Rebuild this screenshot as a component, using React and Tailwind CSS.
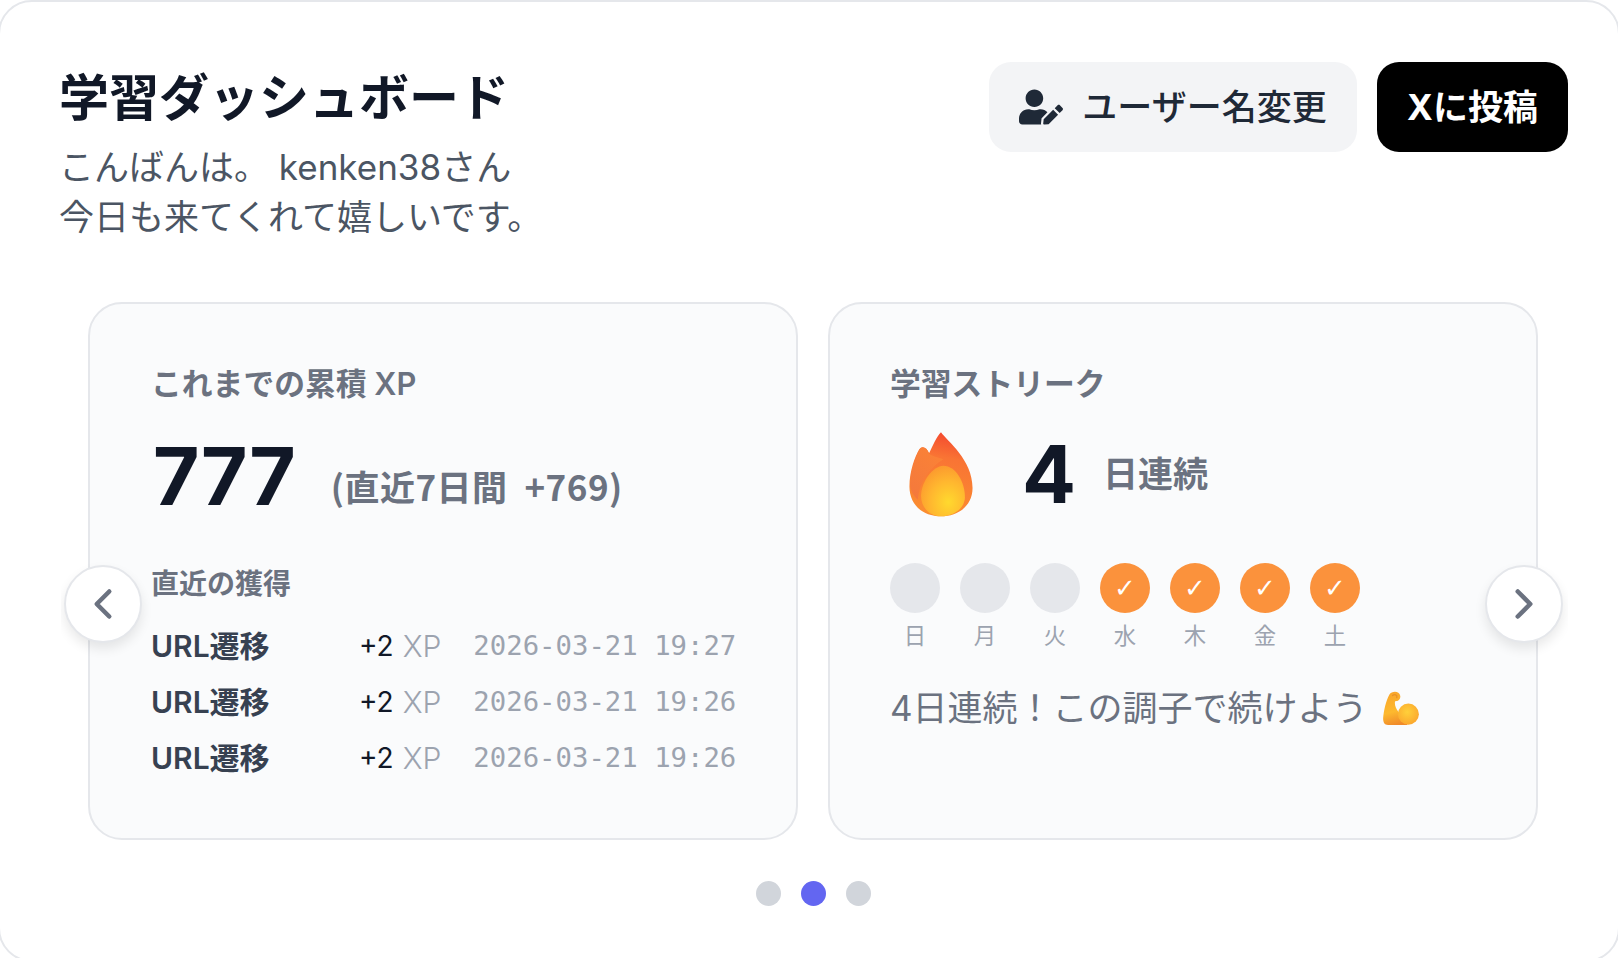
import React from "react";
import { FaUserEdit } from "react-icons/fa";
import { ChevronLeft, ChevronRight } from "lucide-react";

const recent = [
	{ label: "URL遷移", date: "2026-03-21 19:27" },
	{ label: "URL遷移", date: "2026-03-21 19:26" },
	{ label: "URL遷移", date: "2026-03-21 19:26" },
];

const days = [
	{ label: "日", done: false },
	{ label: "月", done: false },
	{ label: "火", done: false },
	{ label: "水", done: true },
	{ label: "木", done: true },
	{ label: "金", done: true },
	{ label: "土", done: true },
];

const FlameIcon = () => (
	<svg viewBox="115 90 200 265" className="w-[68px] h-[88px]">
		<defs>
			<linearGradient id="flameOuter" x1="0.6" y1="0" x2="0.45" y2="1">
				<stop offset="0" stopColor="#f4482f" />
				<stop offset="0.3" stopColor="#f97434" />
				<stop offset="1" stopColor="#fb8e30" />
			</linearGradient>
			<linearGradient id="flameMid" x1="0.8" y1="0" x2="0.2" y2="1">
				<stop offset="0" stopColor="#fb8236" />
				<stop offset="1" stopColor="#f4793c" />
			</linearGradient>
			<radialGradient id="flameInner" cx="0.62" cy="0.72" r="0.85">
				<stop offset="0" stopColor="#ffd92e" />
				<stop offset="0.5" stopColor="#ffb62f" />
				<stop offset="1" stopColor="#fb8f2e" />
			</radialGradient>
		</defs>
		<path d="M215 97C232 122 310 178 310 265C310 320 265 350 215 350C160 350 120 315 120 260C120 215 136 170 150 148C158 136 172 142 179 160C190 140 202 108 215 97Z" fill="url(#flameOuter)" />
		<path d="M222 178C180 205 150 245 145 300C130 285 122 270 122 250C124 215 138 172 150 148C158 136 172 142 179 160C188 170 205 172 222 178Z" fill="url(#flameMid)" />
		<path d="M222 198C260 198 287 248 287 292C287 328 250 350 215 350C180 350 153 322 155 285C158 243 190 200 222 198Z" fill="url(#flameInner)" />
	</svg>
);

const MuscleIcon = () => (
	<svg viewBox="0 0 102 97" className="w-[36px] h-[34px]">
		<defs>
			<linearGradient id="armFill" x1="0.3" y1="0" x2="0.5" y2="1">
				<stop offset="0" stopColor="#f9a62c" />
				<stop offset="0.6" stopColor="#fdb92e" />
				<stop offset="1" stopColor="#f08a2a" />
			</linearGradient>
			<radialGradient id="bicepFill" cx="0.45" cy="0.4" r="0.65">
				<stop offset="0" stopColor="#ffd03a" />
				<stop offset="1" stopColor="#fba52d" />
			</radialGradient>
		</defs>
		<path d="M18 10C24 0 46 -2 49 14C50 24 42 30 34 29C32 40 36 50 44 60L70 97L14 97C4 97 0 90 0 78C2 55 8 28 18 10Z" fill="url(#armFill)" />
		<circle cx="72" cy="66" r="30" fill="url(#bicepFill)" />
		<path d="M27 13C33 8 41 11 39 19" fill="none" stroke="#e8932a" strokeWidth="4" strokeLinecap="round" />
	</svg>
);

const ArrowButton = ({ side, children }) => (
	<button
		type="button"
		className={`absolute top-1/2 -translate-y-1/2 ${side} w-[78px] h-[78px] flex items-center justify-center rounded-full bg-white border-2 border-[#e5e7eb] shadow-[0_6px_12px_rgba(0,0,0,0.09)] text-[#6b7280]`}
	>
		{children}
	</button>
);

export default function App() {
	return (
		<div className="h-[958px] overflow-hidden bg-white font-['Inter','Noto_Sans_CJK_JP',sans-serif]">
			<div className="-mx-[2px] h-[962px] bg-white border-2 border-[#e5e7eb] rounded-[34px] pl-[59px] pr-[50px] pt-[60px]">
				<div className="flex justify-between items-start">
					<div className="mt-[4px]">
						<h1 className="text-[50px] leading-[64px] font-bold text-[#111827]">学習ダッシュボード</h1>
						<p className="mt-[13px] text-[35px] leading-[49.5px] text-[#4b5563]">
							こんばんは。 kenken38さん
							<br />
							今日も来てくれて嬉しいです。
						</p>
					</div>
					<div className="flex gap-[20px]">
						<button type="button" className="w-[368px] h-[90px] flex items-center justify-center gap-[19px] rounded-[22px] bg-[#f3f4f6] text-[#1f2937] text-[35px] font-medium">
							<FaUserEdit className="w-[44px] h-[36px]" />
							ユーザー名変更
						</button>
						<button type="button" className="w-[191px] h-[90px] rounded-[22px] bg-black text-white text-[35px] font-bold">
							Xに投稿
						</button>
					</div>
				</div>

				<div className="relative mt-[60px] ml-[2px] overflow-hidden">
					<div className="flex gap-[30px] h-[538px] pl-[27px]">
						<section className="w-[710px] shrink-0 rounded-[34px] border-2 border-[#e5e7eb] bg-[#fafbfc] pl-[61px] pt-[60px]">
							<h2 className="text-[30.8px] leading-[40px] font-semibold text-[#6b7280]">これまでの累積 XP</h2>
							<div className="mt-[30px] flex items-center gap-[35px]">
								<span className="ml-[2px] text-[80px] leading-[84px] font-bold text-[#111827]">777</span>
								<span className="mt-[21px] font-['Noto_Sans_CJK_JP',sans-serif] text-[35px] tracking-[0.5px] font-semibold text-[#6b7280]">(直近7日間 &nbsp;+769)</span>
							</div>
							<h3 className="mt-[46px] text-[28px] leading-[40px] font-semibold text-[#6b7280]">直近の獲得</h3>
							<ul className="mt-[14px]">
								{recent.map((item, i) => (
									<li key={i} className="flex items-center h-[56px]">
										<span className="w-[208px] text-[30px] font-semibold text-[#374151]">{item.label}</span>
										<span className="text-[28px] text-[#111827]">+2</span>
										<span className="ml-[9px] text-[30px] font-light text-[#9ca3af]">XP</span>
										<span className="ml-[32px] font-['DejaVu_Sans_Mono',monospace] text-[27.3px] text-[#9ca3af]">{item.date}</span>
									</li>
								))}
							</ul>
						</section>

						<section className="w-[710px] shrink-0 rounded-[34px] border-2 border-[#e5e7eb] bg-[#fafbfc] pl-[60px] pt-[60px]">
							<h2 className="text-[30.8px] leading-[40px] font-semibold text-[#6b7280]">学習ストリーク</h2>
							<div className="mt-[26px] ml-[17px] flex items-center">
								<FlameIcon />
								<span className="ml-[47px] text-[80px] leading-[88px] font-bold text-[#111827]">4</span>
								<span className="ml-[27px] text-[35px] font-semibold text-[#6b7280]">日連続</span>
							</div>
							<div className="mt-[45px] flex gap-[20px]">
								{days.map((day) => (
									<div key={day.label} className="w-[50px] flex flex-col items-center">
										<div className={day.done ? "w-[50px] h-[50px] rounded-full bg-[#fb923c] flex items-center justify-center text-white font-['DejaVu_Sans',sans-serif] text-[26px]" : "w-[50px] h-[50px] rounded-full bg-[#e5e7eb]"}>
											{day.done ? "✓" : ""}
										</div>
										<span className="mt-[7px] text-[22.4px] leading-[32px] text-[#9ca3af]">{day.label}</span>
									</div>
								))}
							</div>
							<p className="mt-[32px] flex items-center gap-[15px] text-[35px] leading-[48px] text-[#6b7280]">
								4日連続！この調子で続けよう
								<MuscleIcon />
							</p>
						</section>
					</div>

					<div className="mt-[41px] flex justify-center gap-[20px] pr-[3px]">
						<span className="w-[25px] h-[25px] rounded-full bg-[#d1d5db]" />
						<span className="w-[25px] h-[25px] rounded-full bg-[#6366f1]" />
						<span className="w-[25px] h-[25px] rounded-full bg-[#d1d5db]" />
					</div>

					<ArrowButton side="left-[3px]">
						<ChevronLeft size={50} strokeWidth={2.2} />
					</ArrowButton>
					<ArrowButton side="right-[5px]">
						<ChevronRight size={50} strokeWidth={2.2} />
					</ArrowButton>
				</div>
			</div>
		</div>
	);
}
